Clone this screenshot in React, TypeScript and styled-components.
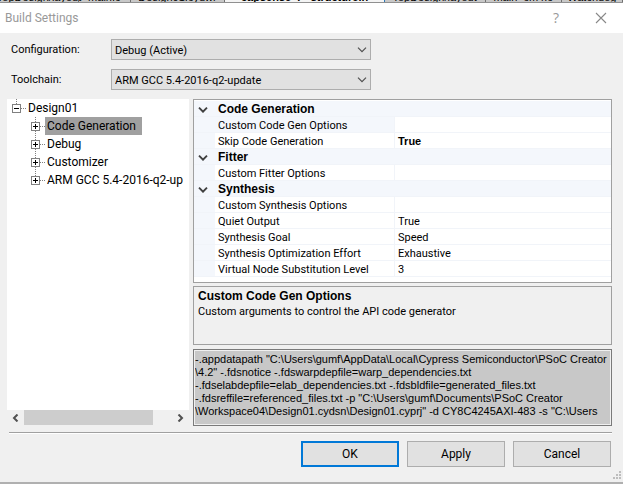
import React from "react";
import styled, { createGlobalStyle, css } from "styled-components";

const uiFont = `Roboto, "Liberation Sans", sans-serif`;
const wideFont = `"Liberation Sans", Arial, sans-serif`;
const shellFont = `"Open Sans", "Noto Sans", sans-serif`;

const GlobalStyle = createGlobalStyle`
  *, *::before, *::after { box-sizing: border-box; }
  body { margin: 0; background: #f0f0f0; }
  ul { list-style: none; margin: 0; padding: 0; }
  button, select, textarea { font: inherit; color: inherit; margin: 0; }
`;

const Page = styled.div`
  display: flex;
  flex-direction: column;
  min-height: 100vh;
  font: 11px/13px ${uiFont};
  color: #000;
  background: #f0f0f0;
`;

const TabStrip = styled.div`
  display: flex;
  height: 3px;
  overflow: hidden;
  background: #c8c8c8;
  border-bottom: 1px solid #909090;
  font-family: ${wideFont};
`;

const Tab = styled.span<{ $grow: number; $active?: boolean }>`
  display: flex;
  flex: ${(p) => p.$grow} 1 0;
  min-width: 0;
  justify-content: center;
  align-items: flex-end;
  white-space: nowrap;
  line-height: 9px;
  border-right: 1px solid #707070;
  ${(p) =>
    p.$active &&
    css`
      font-weight: bold;
      background: #f4f4f4;
      border-color: #2a78b8;
    `}
`;

const Window = styled.div`
  display: flex;
  flex: 1;
  flex-direction: column;
  position: relative;
`;

const TitleBar = styled.header`
  display: flex;
  align-items: center;
  height: 30px;
  padding: 0 16px 0 5px;
  background: #fff;
  color: #999;
`;

const Title = styled.h1`
  flex: 1;
  margin: 0;
  font: 12px/16px ${uiFont};
`;

const CaptionButton = styled.button`
  display: flex;
  align-items: center;
  justify-content: center;
  width: 12px;
  height: 16px;
  margin-left: 33px;
  padding: 0;
  border: 0;
  background: none;
  font: 14px/16px ${shellFont};
`;

const Dialog = styled.main`
  display: flex;
  flex: 1;
  flex-direction: column;
  padding: 6px 11px 0 7px;
  border-bottom: 2px solid #b0b0b0;
`;

const Field = styled.div`
  display: flex;
  align-items: center;
  height: 21px;
  margin-bottom: 9px;
`;

const FieldLabel = styled.label`
  width: 104px;
  padding-left: 4px;
`;

const SelectFrame = styled.div`
  display: grid;
  width: 43%;
  height: 21px;
  align-items: center;
  border: 1px solid #adadad;
  background: #e1e1e1;

  > * { grid-area: 1 / 1; }
  > svg { justify-self: end; margin-right: 3px; pointer-events: none; }
`;

const Select = styled.select`
  appearance: none;
  width: 100%;
  height: 19px;
  padding: 1px 16px 0 3px;
  border: 0;
  border-radius: 0;
  background: none;
`;

const Columns = styled.div`
  display: grid;
  flex: 1;
  grid-template-columns: 182px minmax(0, 1fr);
  column-gap: 4px;
`;

const TreePane = styled.nav`
  display: flex;
  flex-direction: column;
  min-width: 0;
  padding-bottom: 1px;
`;

const Tree = styled.div`
  flex: 1;
  overflow: hidden;
  background: #fff;
  font-size: 12px;
  line-height: 18px;
  white-space: nowrap;
`;

const TreeRow = styled.div<{ $child?: boolean }>`
  display: flex;
  align-items: center;
  height: 18px;
  padding-left: ${(p) => (p.$child ? 24 : 5)}px;
`;

const Expander = styled.button`
  display: flex;
  padding: 0;
  border: 0;
  background: none;
`;

const NodeLabel = styled.span<{ $selected?: boolean }>`
  height: 18px;
  padding: 0 6px 0 2px;
  background: ${(p) => (p.$selected ? "#a0a0a0" : "transparent")};
`;

const ScrollBar = styled.div`
  display: flex;
  align-items: center;
  height: 15px;
`;

const ScrollArrow = styled.button`
  display: flex;
  align-items: center;
  justify-content: center;
  width: 17px;
  height: 15px;
  padding: 0;
  border: 0;
  background: none;
`;

const ScrollTrack = styled.div`
  flex: 1;
  height: 15px;
`;

const ScrollThumb = styled.div`
  width: 87%;
  height: 15px;
  background: #cdcdcd;
`;

const Details = styled.div`
  display: flex;
  flex-direction: column;
  min-width: 0;
`;

const GridFrame = styled.section`
  padding: 1px 0 5px;
  border: 1px solid #a0a0a0;
  background: #fff;
`;

const PropertyTable = styled.table`
  width: 100%;
  border-collapse: separate;
  border-spacing: 0;
  table-layout: fixed;
  line-height: 13px;

  tr { height: 16px; }
  td, th {
    height: 16px;
    padding: 2px 3px 0;
    text-align: left;
    white-space: nowrap;
    border-bottom: 1px solid #f1f4f9;
  }
`;

const ToggleCell = styled.td`
  background: #f4f7fc;
`;

const Toggle = styled.button`
  display: flex;
  width: 12px;
  height: 13px;
  padding: 0;
  align-items: center;
  justify-content: center;
  border: 0;
  background: none;
`;

const CategoryCell = styled.th`
  font-family: ${wideFont};
  font-size: 12px;
  background: #f4f7fc;
`;

const NameCell = styled.th<{ $selected?: boolean }>`
  font-weight: normal;
  border-right: 1px solid #f1f4f9;
  background: ${(p) => (p.$selected ? "#f4f7fc" : "#fff")};
`;

const ValueCell = styled.td<{ $changed?: boolean }>`
  ${(p) =>
    p.$changed &&
    css`
      font-family: ${wideFont};
      font-weight: bold;
    `}
`;

const HelpBox = styled.section`
  height: 59px;
  margin-top: 3px;
  padding: 2px 4px;
  border: 1px solid #a0a0a0;
`;

const HelpTitle = styled.h2`
  margin: 0 0 1px;
  font: bold 12px/15px ${wideFont};
`;

const HelpText = styled.p`
  margin: 0;
  line-height: 13px;
`;

const CommandLine = styled.textarea`
  display: block;
  flex: 1;
  min-height: 77px;
  width: 100%;
  margin-top: 4px;
  padding: 3px 1px 2px;
  border: 1px solid #7a7a7a;
  border-radius: 0;
  outline: 1px solid #f0f0f0;
  outline-offset: -2px;
  background: #c8c8c8;
  font-family: ${wideFont};
  resize: none;
  overflow: hidden;
  white-space: pre;
`;

const Divider = styled.hr`
  width: calc(100% - 2px);
  height: 2px;
  margin: 6px 0 7px 2px;
  border: 0;
  border-top: 1px solid #a0a0a0;
  background: #fff;
`;

const Footer = styled.footer`
  display: flex;
  justify-content: flex-end;
  gap: 8px;
  padding: 0 1px 15px 0;
`;

const DialogButton = styled.button<{ $primary?: boolean }>`
  width: 98px;
  height: 26px;
  padding: 0;
  border: ${(p) => (p.$primary ? "2px solid #0078d7" : "1px solid #adadad")};
  background: #e1e1e1;
  font-size: 12px;
`;

const Grip = styled.svg`
  position: absolute;
  right: 1px;
  bottom: 4px;
`;

function Chevron({ heavy = false }: { heavy?: boolean }) {
  return (
    <svg width="10" height="6" viewBox="0 0 10 6" fill="none" aria-hidden="true">
      <path d="M1 .7 5 4.7 9 .7" stroke={heavy ? "#404040" : "#505050"} strokeWidth={heavy ? 1.9 : 1.2} />
    </svg>
  );
}

function NodeBox({ open, joined }: { open?: boolean; joined?: boolean }) {
  return (
    <svg width="14" height="18" viewBox="0 0 14 18" fill="none" shapeRendering="crispEdges" aria-hidden="true">
      <path d={joined ? "M4.5 0V18" : "M4.5 0V5"} stroke="#808080" strokeDasharray="1 1" />
      <path d="M9 9.5H14" stroke="#808080" strokeDasharray="1 1" />
      <rect x=".5" y="5.5" width="8" height="8" fill="#fff" stroke="#808080" />
      <path d={open ? "M2 9.5H7" : "M2 9.5H7M4.5 7V12"} stroke="#000" />
    </svg>
  );
}

function ScrollGlyph({ right = false }: { right?: boolean }) {
  return (
    <svg width="7" height="8" viewBox="0 0 7 8" fill="none" aria-hidden="true">
      <path d={right ? "M1.5 .5 5 4 1.5 7.5" : "M5.5 .5 2 4 5.5 7.5"} stroke="#505050" strokeWidth="2" />
    </svg>
  );
}

const tabs = [
  { name: "TopDesign/layout", grow: 79 },
  { name: "main.c", grow: 51 },
  { name: "Design01.cydwr", grow: 95 },
  { name: "capsense_P_structure.h", grow: 160, active: true },
  { name: "TopDesign/layout", grow: 101 },
  { name: "main_cm4.c", grow: 76 },
  { name: "Watchdog", grow: 61 },
];

const nodes = ["Code Generation", "Debug", "Customizer", "ARM GCC 5.4-2016-q2-up"];

interface Property {
  name: string;
  value: string;
  selected?: boolean;
  changed?: boolean;
}

const categories: { name: string; items: Property[] }[] = [
  {
    name: "Code Generation",
    items: [
      { name: "Custom Code Gen Options", value: "", selected: true },
      { name: "Skip Code Generation", value: "True", changed: true },
    ],
  },
  { name: "Fitter", items: [{ name: "Custom Fitter Options", value: "" }] },
  {
    name: "Synthesis",
    items: [
      { name: "Custom Synthesis Options", value: "" },
      { name: "Quiet Output", value: "True" },
      { name: "Synthesis Goal", value: "Speed" },
      { name: "Synthesis Optimization Effort", value: "Exhaustive" },
      { name: "Virtual Node Substitution Level", value: "3" },
    ],
  },
];

const commandLine = [
  `-.appdatapath "C:\\Users\\gumf\\AppData\\Local\\Cypress Semiconductor\\PSoC Creator`,
  `\\4.2" -.fdsnotice -.fdswarpdepfile=warp_dependencies.txt`,
  `-.fdselabdepfile=elab_dependencies.txt -.fdsbldfile=generated_files.txt`,
  `-.fdsreffile=referenced_files.txt -p "C:\\Users\\gumf\\Documents\\PSoC Creator`,
  `\\Workspace04\\Design01.cydsn\\Design01.cyprj" -d CY8C4245AXI-483 -s "C:\\Users`,
].join("\n");

export default function App() {
  return (
    <Page>
      <GlobalStyle />
      <TabStrip>
        {tabs.map((t, i) => (
          <Tab key={i} $grow={t.grow} $active={t.active}>{t.name}</Tab>
        ))}
      </TabStrip>
      <Window>
        <TitleBar>
          <Title>Build Settings</Title>
          <CaptionButton aria-label="Help">?</CaptionButton>
          <CaptionButton aria-label="Close">
            <svg width="12" height="12" viewBox="0 0 12 12" fill="none" aria-hidden="true">
              <path d="M1 1 11 11M11 1 1 11" stroke="#888" strokeWidth="1.1" />
            </svg>
          </CaptionButton>
        </TitleBar>
        <Dialog>
          <Field>
            <FieldLabel htmlFor="configuration">Configuration:</FieldLabel>
            <SelectFrame>
              <Select id="configuration"><option>Debug (Active)</option></Select>
              <Chevron />
            </SelectFrame>
          </Field>
          <Field>
            <FieldLabel htmlFor="toolchain">Toolchain:</FieldLabel>
            <SelectFrame>
              <Select id="toolchain"><option>ARM GCC 5.4-2016-q2-update</option></Select>
              <Chevron />
            </SelectFrame>
          </Field>
          <Columns>
            <TreePane aria-label="Settings">
              <Tree>
                <TreeRow>
                  <Expander aria-label="Collapse Design01"><NodeBox open /></Expander>
                  <NodeLabel>Design01</NodeLabel>
                </TreeRow>
                <ul>
                  {nodes.map((n, i) => (
                    <li key={n}>
                      <TreeRow $child>
                        <Expander aria-label={`Expand ${n}`}><NodeBox joined={i < nodes.length - 1} /></Expander>
                        <NodeLabel $selected={i === 0}>{n}</NodeLabel>
                      </TreeRow>
                    </li>
                  ))}
                </ul>
              </Tree>
              <ScrollBar>
                <ScrollArrow aria-label="Scroll left"><ScrollGlyph /></ScrollArrow>
                <ScrollTrack><ScrollThumb /></ScrollTrack>
                <ScrollArrow aria-label="Scroll right"><ScrollGlyph right /></ScrollArrow>
              </ScrollBar>
            </TreePane>
            <Details>
              <GridFrame>
                <PropertyTable>
                  <colgroup>
                    <col width="21" />
                    <col width="180" />
                    <col />
                  </colgroup>
                  {categories.map((c) => (
                    <tbody key={c.name}>
                      <tr>
                        <ToggleCell><Toggle aria-label={`Collapse ${c.name}`}><Chevron heavy /></Toggle></ToggleCell>
                        <CategoryCell colSpan={2} scope="rowgroup">{c.name}</CategoryCell>
                      </tr>
                      {c.items.map((p) => (
                        <tr key={p.name}>
                          <ToggleCell />
                          <NameCell scope="row" $selected={p.selected}>{p.name}</NameCell>
                          <ValueCell $changed={p.changed}>{p.value}</ValueCell>
                        </tr>
                      ))}
                    </tbody>
                  ))}
                </PropertyTable>
              </GridFrame>
              <HelpBox>
                <HelpTitle>Custom Code Gen Options</HelpTitle>
                <HelpText>Custom arguments to control the API code generator</HelpText>
              </HelpBox>
              <CommandLine aria-label="Command line" readOnly value={commandLine} />
            </Details>
          </Columns>
          <Divider />
          <Footer>
            <DialogButton $primary>OK</DialogButton>
            <DialogButton>Apply</DialogButton>
            <DialogButton>Cancel</DialogButton>
          </Footer>
        </Dialog>
        <Grip width="9" height="9" viewBox="0 0 9 9" fill="#bdbdbd" aria-hidden="true">
          <path d="M6 0h2v2H6zM3 3h2v2H3zM6 3h2v2H6zM0 6h2v2H0zM3 6h2v2H3zM6 6h2v2H6z" />
        </Grip>
      </Window>
    </Page>
  );
}
